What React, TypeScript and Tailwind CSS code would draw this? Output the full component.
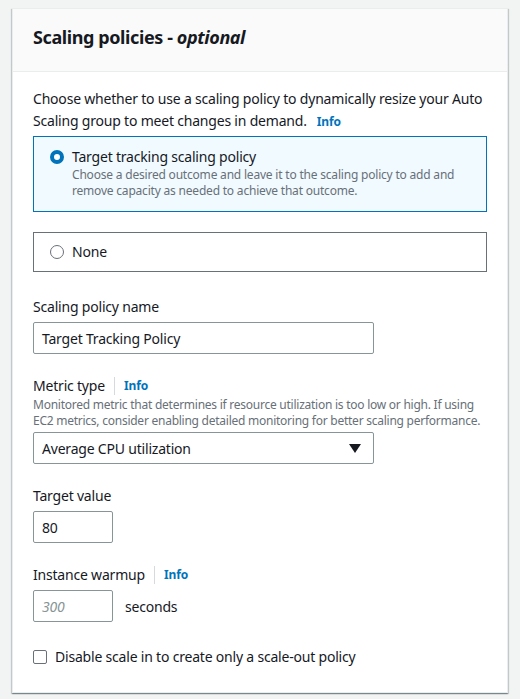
import React from "react";

const font = { fontFamily: '"Noto Sans", "Open Sans", Arial, sans-serif' };

function Info() {
  return <span className="inline-block text-[12px] font-bold text-[#0073bb] leading-[16px] tracking-[-0.1px]">Info</span>;
}

export default function App() {
  return (
    <div className="min-h-[699px] bg-[#f2f3f3] pt-2 pl-3 pr-3 pb-2 text-[#16191f] tracking-[-0.2px]" style={font}>
      <div className="bg-white border border-[#eaeded] shadow-[0_1px_1px_0_rgba(0,28,36,0.3),1px_1px_1px_0_rgba(0,28,36,0.15),-1px_1px_1px_0_rgba(0,28,36,0.15)]">
        <div className="h-[63px] bg-[#fafafa] border-b border-[#eaeded] px-5 pb-[6px] flex items-center">
          <h2 className="text-[18px] font-bold leading-[22px] tracking-[-0.4px]">
            Scaling policies - <i>optional</i>
          </h2>
        </div>
        <div className="px-5 pt-4 pb-[25px]">
          <p className="text-[14px] leading-[22px]">
            Choose whether to use a scaling policy to dynamically resize your Auto Scaling group to meet changes in demand.
            <span className="inline-block ml-[10px]"><Info /></span>
          </p>
          <div className="mt-1 border border-[#0073bb] bg-[#f1faff] pl-4 pr-4 pt-[10px] pb-3 flex gap-2">
            <span className="mt-[3px] w-[14px] h-[14px] rounded-full border-[4px] border-[#0073bb] bg-white shrink-0" />
            <div>
              <div className="text-[14px] leading-[20px]">Target tracking scaling policy</div>
              <div className="text-[12px] leading-[16px] text-[#687078]">
                Choose a desired outcome and leave it to the scaling policy to add and remove capacity as needed to achieve that outcome.
              </div>
            </div>
          </div>
          <div className="mt-[20px] h-[40px] border border-[#687078] pl-4 flex items-center gap-2">
            <span className="w-[14px] h-[14px] rounded-full border border-[#687078] bg-white shrink-0" />
            <span className="text-[14px] leading-[20px]">None</span>
          </div>

          <div className="mt-[24px] text-[14px] leading-[22px]">Scaling policy name</div>
          <div className="mt-1 w-[341px] h-[32px] border border-[#879596] rounded-[2px] px-2 flex items-center text-[14px]">
            Target Tracking Policy
          </div>

          <div className="mt-[21px] flex items-center text-[14px] leading-[22px]">
            <span>Metric type</span>
            <span className="mx-[9px] h-[18px] w-px bg-[#d5dbdb]" />
            <Info />
          </div>
          <div className="text-[12px] leading-[16px] text-[#687078] tracking-[-0.25px]">
            Monitored metric that determines if resource utilization is too low or high. If using EC2 metrics, consider enabling detailed monitoring for better scaling performance.
          </div>
          <div className="mt-[3px] w-[341px] h-[32px] border border-[#879596] rounded-[2px] pl-2 pr-3 flex items-center justify-between text-[14px]">
            <span>Average CPU utilization</span>
            <svg width="12" height="9" viewBox="0 0 12 9"><path d="M0 0h12L6 9z" fill="#16191f" /></svg>
          </div>

          <div className="mt-[21px] text-[14px] leading-[22px]">Target value</div>
          <div className="mt-1 w-[80px] h-[32px] border border-[#879596] rounded-[2px] px-2 flex items-center text-[14px]">
            80
          </div>

          <div className="mt-[21px] flex items-center text-[14px] leading-[22px]">
            <span>Instance warmup</span>
            <span className="mx-[9px] h-[18px] w-px bg-[#d5dbdb]" />
            <Info />
          </div>
          <div className="mt-1 flex items-center gap-3">
            <div className="w-[80px] h-[32px] border border-[#879596] rounded-[2px] px-2 flex items-center text-[14px] italic text-[#879596]">
              300
            </div>
            <span className="text-[14px]">seconds</span>
          </div>

          <div className="mt-[25px] flex items-center gap-2">
            <span className="w-[14px] h-[14px] border border-[#687078] rounded-[2px] bg-white shrink-0" />
            <span className="text-[14px] leading-[20px]">Disable scale in to create only a scale-out policy</span>
          </div>
        </div>
      </div>
    </div>
  );
}
